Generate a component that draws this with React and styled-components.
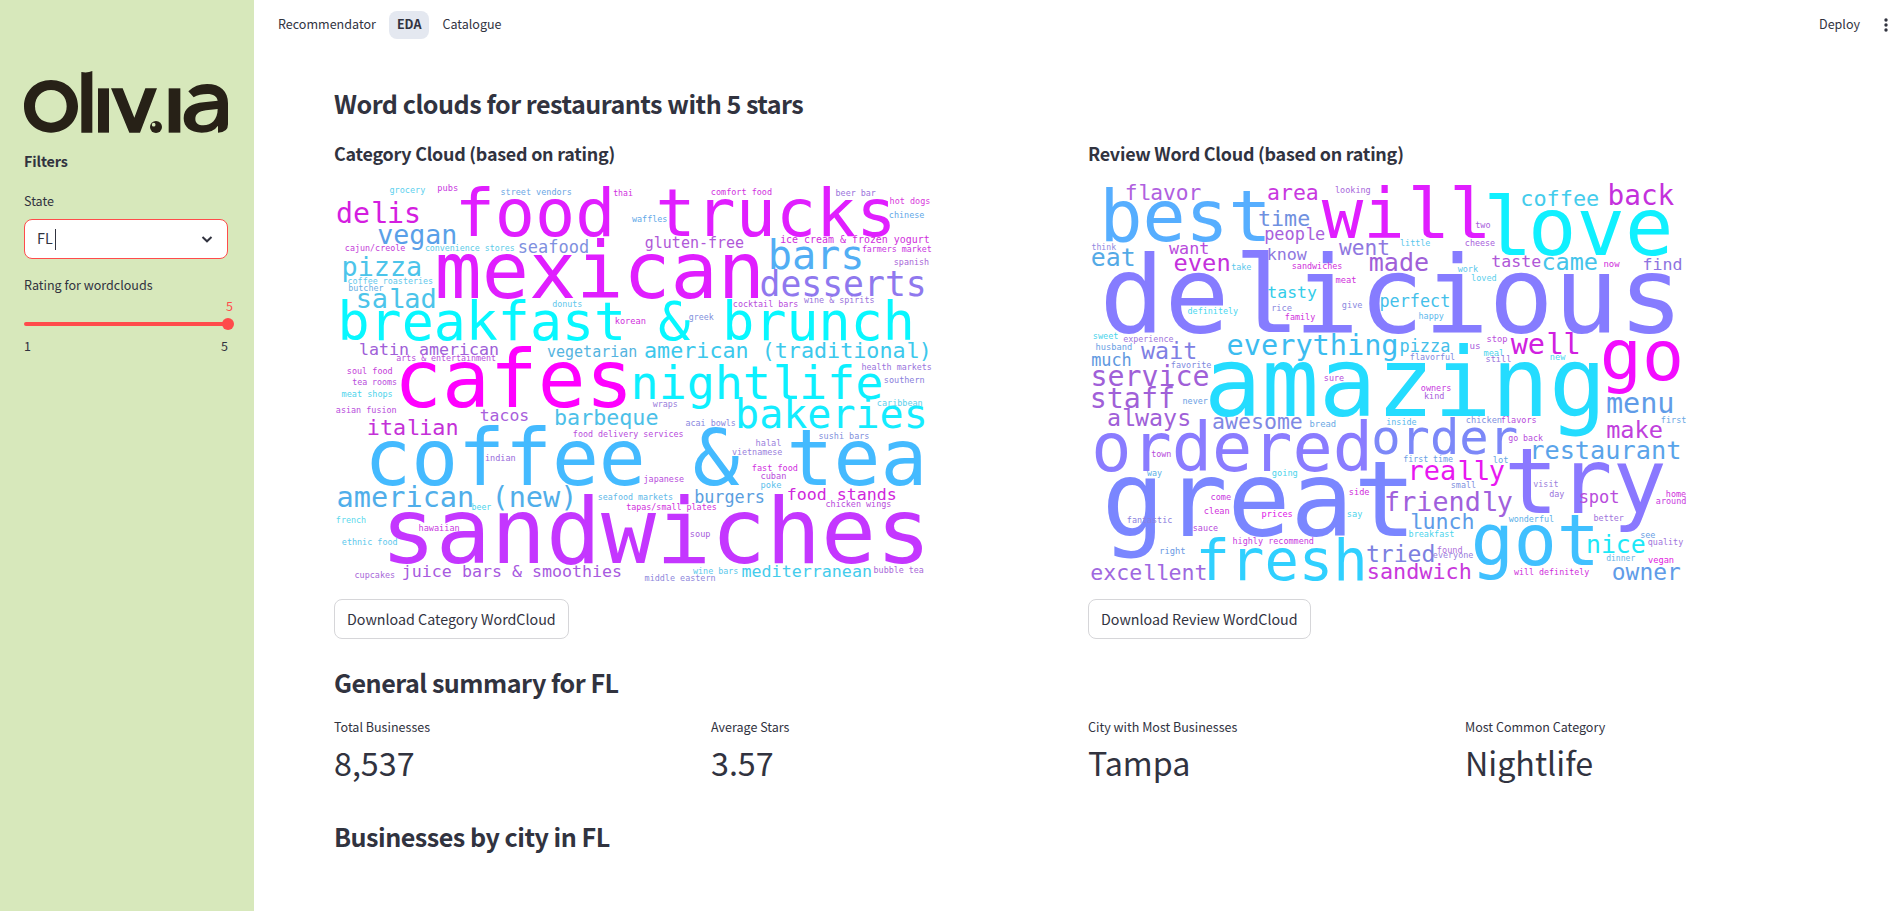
import React from "react";
import styled, { createGlobalStyle } from "styled-components";

const GlobalStyle = createGlobalStyle`
  * { box-sizing: border-box; }
  body {
    margin: 0;
    background: #ffffff;
    color: #31333f;
    font-family: "Noto Sans CJK SC", "Noto Sans", sans-serif;
    overflow: hidden;
  }
  h2, h3, p { margin: 0; }
`;

const Page = styled.div`
  display: flex;
  width: 100%;
  height: 911px;
`;

const Sidebar = styled.aside`
  width: 254px;
  flex: none;
  padding: 71px 26px 0 24px;
  background: #d7e8bb;
  display: flex;
  flex-direction: column;
`;

const Logo = styled.svg`
  display: block;
  width: 204px;
  height: 62px;
  flex: none;
`;

const SidebarTitle = styled.p`
  margin-top: 16px;
  font-size: 14.34px;
  line-height: 24px;
  font-weight: 600;
  letter-spacing: -0.1px;
`;

const FieldLabel = styled.p`
  margin-top: ${(p) => p.$gap}px;
  font-size: 12.54px;
  line-height: 20px;
`;

const SelectBox = styled.div`
  margin-top: 8px;
  height: 40px;
  border: 1px solid #ff4b4b;
  border-radius: 8px;
  background: #ffffff;
  display: flex;
  align-items: center;
  padding: 0 13px 0 12px;
`;

const SelectValue = styled.span`
  font-size: 14.34px;
  line-height: 20px;
  margin-bottom: 2px;
`;

const Caret = styled.span`
  width: 1px;
  height: 21px;
  margin-left: 2px;
  margin-right: auto;
  background: #31333f;
`;

const SliderValue = styled.div`
  width: 209px;
  margin-top: 1px;
  text-align: right;
  color: #ff4b4b;
  font-size: 12.54px;
  line-height: 20px;
`;

const SliderTrack = styled.div`
  height: 4px;
  margin-top: 6px;
  border-radius: 4px;
  background: #ff4b4b;
  display: flex;
  align-items: center;
  justify-content: flex-end;
`;

const SliderThumb = styled.span`
  width: 12px;
  height: 12px;
  flex: none;
  margin-right: -6px;
  border-radius: 50%;
  background: #ff4b4b;
`;

const SliderRange = styled.div`
  display: flex;
  justify-content: space-between;
  margin-top: 10px;
  font-size: 12.54px;
  line-height: 20px;
`;

const Main = styled.main`
  flex: 1;
  min-width: 0;
  display: flex;
  flex-direction: column;
`;

const TopBar = styled.header`
  height: 50px;
  flex: none;
  display: flex;
  align-items: center;
  padding: 0 12px 0 11px;
`;

const NavItem = styled.span`
  height: 28px;
  padding: 0 ${(p) => (p.$active ? 8 : 13)}px;
  border-radius: 8px;
  background: ${(p) => (p.$active ? "#e4e8f0" : "transparent")};
  font-size: 12.54px;
  font-weight: ${(p) => (p.$active ? 600 : 400)};
  line-height: 25px;
`;

const Deploy = styled.span`
  height: 28px;
  margin-left: auto;
  font-size: 12.54px;
  line-height: 25px;
`;

const MenuDots = styled.svg`
  width: 16px;
  height: 16px;
  margin: 0 -4px 0 18px;
`;

const Content = styled.div`
  padding: 36px 76px 0 80px;
  display: flex;
  flex-direction: column;
`;

const Heading = styled.h2`
  margin-top: ${(p) => p.$gap || 0}px;
  font-size: 25.1px;
  line-height: 34px;
  font-weight: 600;
  letter-spacing: -0.49px;
`;

const Columns = styled.div`
  display: grid;
  grid-template-columns: repeat(${(p) => p.$count}, 1fr);
  column-gap: 16px;
`;

const CloudColumn = styled.section`
  display: flex;
  flex-direction: column;
  align-items: flex-start;
  padding-top: 21px;
`;

const CloudTitle = styled.h3`
  font-size: 17.92px;
  line-height: 24px;
  font-weight: 600;
  letter-spacing: -0.24px;
`;

const CloudCanvas = styled.svg`
  display: block;
  width: 600px;
  height: 400px;
  margin-top: 17px;
  overflow: visible;
  font-family: "DejaVu Sans Mono", monospace;
`;

const SerifStem = styled.tspan`
  font-family: "Liberation Mono", monospace;
`;

const DownloadButton = styled.button`
  height: 40px;
  margin-top: 17px;
  padding: 0 12px;
  border: 1px solid #d6d6d9;
  border-radius: 8px;
  background: #ffffff;
  color: #31333f;
  font-family: inherit;
  font-size: 14.27px;
  line-height: 24px;
`;

const Metric = styled.div`
  padding-top: 18px;
`;

const MetricLabel = styled.p`
  font-size: 12.54px;
  line-height: 20px;
`;

const MetricValue = styled.p`
  margin-top: 3px;
  font-size: 32.25px;
  line-height: 44px;
`;

/* Each word: text, left and right edge of its ink, baseline, colour.
   The grid of a cloud has three units to the pixel. */
const CATEGORY_WORDS = [
  ["grocery", 195, 300, 67, "#5cd0ee"],
  ["pubs", 339, 397, 62, "#c838e0"],
  ["street vendors", 529, 738, 74, "#6aa6e4"],
  ["food trucks", 408, 1695, 195, "#e01eff"],
  ["thai", 866, 922, 76, "#d030e0"],
  ["delis", 38, 280, 157, "#d41ee0"],
  ["vegan", 160, 390, 220, "#5aa0e8"],
  ["cajun/creole", 62, 240, 242, "#c43cd8"],
  ["convenience stores", 302, 567, 242, "#5ccbe8"],
  ["seafood", 583, 788, 248, "#7f90e0"],
  ["mexican", 340, 1300, 383, "#e01eff"],
  ["pizza", 57, 285, 317, "#4cc4ea"],
  ["coffee roasteries", 70, 322, 339, "#62c8ec"],
  ["butcher", 72, 175, 362, "#6ab0e4"],
  ["salad", 100, 328, 412, "#4cc4ea"],
  ["breakfast & brunch", 52, 1756, 508, "#08f7ff"],
  ["donuts", 683, 770, 410, "#62c8ec"],
  ["korean", 872, 961, 461, "#d032dc"],
  ["latin american", 106, 518, 552, "#a060d8"],
  ["arts & entertainment", 215, 511, 572, "#b84cdc"],
  ["vegetarian", 668, 933, 558, "#55b4e0"],
  ["soul food", 68, 201, 610, "#c440d8"],
  ["cafes", 230, 902, 709, "#ff00ff"],
  ["waffles", 921, 1025, 154, "#62a8e8"],
  ["comfort food", 1160, 1339, 73, "#d030e0"],
  ["beer bar", 1534, 1652, 76, "#9a74dc"],
  ["hot dogs", 1696, 1814, 100, "#d838dc"],
  ["chinese", 1694, 1797, 143, "#62a8e8"],
  ["gluten-free", 962, 1255, 233, "#b058d8"],
  ["ice cream & frozen yogurt", 1368, 1812, 217, "#d02edc"],
  ["bars", 1339, 1607, 294, "#52aef4"],
  ["farmers market", 1613, 1818, 245, "#c838e0"],
  ["spanish", 1709, 1810, 284, "#a868d8"],
  ["desserts", 1310, 1795, 375, "#8f78ee"],
  ["wine & spirits", 1437, 1646, 397, "#9a74dc"],
  ["cocktail bars", 1226, 1418, 410, "#b84cdc"],
  ["greek", 1093, 1166, 448, "#7f90dc"],
  ["american (traditional)", 961, 1807, 561, "#3cc8ec"],
  ["health markets", 1612, 1818, 599, "#9a74dc"],
  ["nightlife", 930, 1667, 685, "#0cf0ff"],
  ["southern", 1679, 1797, 638, "#8a80dc"],
  ["tea rooms", 83, 214, 644, "#b84cdc"],
  ["meat shops", 51, 201, 680, "#4cd4ec"],
  ["asian fusion", 34, 213, 727, "#b84cdc"],
  ["italian", 131, 395, 792, "#c430d8"],
  ["tacos", 467, 608, 750, "#a860dc"],
  ["barbeque", 693, 997, 764, "#4cc0e8"],
  ["food delivery services", 746, 1073, 800, "#b84cdc"],
  ["coffee & tea", 140, 1788, 943, "#44baff"],
  ["indian", 482, 570, 872, "#9a6cdc"],
  ["american (new)", 40, 740, 1010, "#50aeea"],
  ["beer", 442, 498, 1018, "#4cd4ec"],
  ["seafood markets", 821, 1042, 989, "#62b8e8"],
  ["sandwiches", 195, 1792, 1177, "#c436ff"],
  ["french", 35, 121, 1058, "#5cd8ec"],
  ["hawaiian", 283, 402, 1082, "#c838e0"],
  ["ethnic food", 52, 216, 1123, "#5cc8ec"],
  ["juice bars & smoothies", 235, 887, 1220, "#a85ae0"],
  ["cupcakes", 91, 208, 1222, "#a868d8"],
  ["tapas/small plates", 905, 1173, 1019, "#d030dc"],
  ["wraps", 983, 1056, 708, "#9a80dc"],
  ["acai bowls", 1083, 1230, 765, "#8a88e0"],
  ["bakeries", 1241, 1797, 773, "#14ecff"],
  ["caribbean", 1658, 1791, 707, "#5cd0ec"],
  ["sushi bars", 1483, 1631, 806, "#7f90dc"],
  ["halal", 1294, 1367, 827, "#9a80dc"],
  ["vietnamese", 1222, 1371, 854, "#9a80dc"],
  ["fast food", 1283, 1417, 902, "#d030e0"],
  ["cuban", 1309, 1382, 925, "#b84cdc"],
  ["poke", 1309, 1368, 952, "#5cc0ec"],
  ["japanese", 958, 1076, 935, "#b84cdc"],
  ["burgers", 1112, 1315, 997, "#5a9ee0"],
  ["food stands", 1390, 1711, 988, "#d028dc"],
  ["chicken wings", 1504, 1697, 1009, "#b84cdc"],
  ["soup", 1097, 1155, 1100, "#a860dc"],
  ["wine bars", 1104, 1238, 1210, "#5cc8ec"],
  ["mediterranean", 1252, 1637, 1220, "#44ccec"],
  ["bubble tea", 1648, 1795, 1208, "#a868d8"],
  ["middle eastern", 960, 1170, 1231, "#8f88dc"],
];

const REVIEW_WORDS = [
  ["flavor", 140, 362, 87, "#b060e0"],
  ["best", 78, 554, 212, "#56aeff"],
  ["area", 565, 711, 87, "#c838e0"],
  ["looking", 767, 870, 68, "#a868dc"],
  ["will", 725, 1203, 203, "#e01eff"],
  ["time", 538, 687, 165, "#7090e0"],
  ["people", 557, 733, 208, "#a860dc"],
  ["think", 36, 108, 239, "#9088e0"],
  ["eat", 37, 160, 287, "#54aae6"],
  ["want", 267, 383, 251, "#b84cdc"],
  ["know", 566, 681, 268, "#8f78e0"],
  ["went", 777, 924, 253, "#8f78e0"],
  ["even", 285, 446, 302, "#c430dc"],
  ["delicious", 78, 1779, 484, "#867cff"],
  ["take", 455, 513, 299, "#5cc8ec"],
  ["sandwiches", 638, 785, 296, "#d030dc"],
  ["made", 870, 1043, 301, "#a060d8"],
  ["meat", 768, 827, 337, "#d030dc"],
  ["tasty", 565, 709, 382, "#34cdea"],
  ["definitely", 324, 474, 431, "#4cd8f0"],
  ["rice", 578, 635, 421, "#8a88e0"],
  ["family", 617, 705, 449, "#d030dc"],
  ["give", 787, 846, 413, "#8a88e0"],
  ["perfect", 903, 1106, 410, "#44c0ea"],
  ["sweet", 41, 113, 506, "#4cd4ec"],
  ["experience", 131, 279, 515, "#a074dc"],
  ["husband", 49, 154, 539, "#6aa0e4"],
  ["wait", 183, 345, 565, "#7f80e4"],
  ["much", 36, 151, 586, "#6098e0"],
  ["favorite", 275, 393, 593, "#8088e0"],
  ["everything", 445, 948, 554, "#3cbcf0"],
  ["amazing", 389, 1553, 737, "#24dcff"],
  ["service", 40, 384, 645, "#a060d8"],
  ["sure", 734, 791, 632, "#b84cdc"],
  ["coffee", 1327, 1554, 107, "#44ccec"],
  ["back", 1590, 1782, 103, "#c430dc"],
  ["love", 1217, 1767, 253, "#10f0ff"],
  ["two", 1187, 1230, 173, "#a860dc"],
  ["little", 962, 1050, 227, "#5cc8ec"],
  ["cheese", 1157, 1244, 226, "#a860dc"],
  ["taste", 1237, 1381, 290, "#b058d8"],
  ["came", 1391, 1550, 299, "#44c4ea"],
  ["now", 1573, 1619, 288, "#d030dc"],
  ["find", 1692, 1803, 299, "#8f74e0"],
  ["work", 1133, 1194, 305, "#5cc8ec"],
  ["loved", 1175, 1248, 332, "#5cd0ec"],
  ["happy", 1018, 1091, 446, "#5cb8ec"],
  ["pizza", 963, 1107, 543, "#44c0ea"],
  ["us", 1171, 1199, 536, "#a860dc"],
  ["flavorful", 992, 1123, 569, "#8088e0"],
  ["stop", 1222, 1281, 513, "#b84cdc"],
  ["meal", 1212, 1270, 555, "#4cd4ec"],
  ["still", 1219, 1292, 575, "#9a74dc"],
  ["well", 1292, 1490, 550, "#d020e0"],
  ["new", 1412, 1456, 569, "#4cd8f0"],
  ["go", 1572, 1799, 629, "#f30cff"],
  ["staff", 38, 278, 712, "#a060d8"],
  ["never", 310, 383, 700, "#6aa0e4"],
  ["always", 85, 327, 767, "#a060d8"],
  ["awesome", 400, 665, 775, "#7f88e4"],
  ["bread", 691, 766, 770, "#6aa8e4"],
  ["ordered", 47, 861, 901, "#8a7cff"],
  ["order", 883, 1309, 849, "#7c88f8"],
  ["town", 215, 272, 860, "#b84cdc"],
  ["way", 201, 245, 917, "#5cb0e8"],
  ["going", 577, 651, 917, "#4cd4ec"],
  ["great", 84, 979, 1096, "#7a86ff"],
  ["come", 394, 452, 989, "#c838e0"],
  ["side", 809, 867, 974, "#d030dc"],
  ["clean", 374, 447, 1031, "#d030dc"],
  ["prices", 547, 636, 1039, "#e020e8"],
  ["say", 803, 846, 1039, "#4cd4ec"],
  ["fantastic", 143, 275, 1058, "#8a80e0"],
  ["sauce", 341, 413, 1082, "#b84cdc"],
  ["highly recommend", 460, 700, 1120, "#c838e0"],
  ["fresh", 363, 848, 1228, "#30d0ff"],
  ["right", 242, 314, 1150, "#6a98e4"],
  ["excellent", 35, 376, 1227, "#a068e0"],
  ["tried", 862, 1060, 1173, "#7c80e0"],
  ["sandwich", 867, 1170, 1226, "#c838dc"],
  ["owners", 1024, 1112, 662, "#c838e0"],
  ["kind", 1035, 1091, 686, "#a860dc"],
  ["inside", 921, 1008, 764, "#5cb8ec"],
  ["chicken", 1160, 1264, 758, "#7f90e0"],
  ["flavors", 1265, 1368, 758, "#b84cdc"],
  ["go back", 1286, 1389, 812, "#b84cdc"],
  ["menu", 1582, 1776, 727, "#609ce8"],
  ["first", 1745, 1817, 758, "#6aa8e4"],
  ["make", 1582, 1745, 802, "#c040dc"],
  ["restaurant", 1361, 1797, 864, "#5aa4ea"],
  ["first time", 972, 1118, 875, "#6aa0e4"],
  ["lot", 1240, 1283, 877, "#6aa8e4"],
  ["really", 997, 1272, 929, "#e818f0"],
  ["small", 1115, 1186, 953, "#7f90e0"],
  ["try", 1288, 1750, 1027, "#8a78ff"],
  ["visit", 1361, 1433, 950, "#9a80dc"],
  ["day", 1409, 1452, 979, "#9a74dc"],
  ["spot", 1501, 1614, 997, "#b84cdc"],
  ["home", 1760, 1817, 979, "#d030dc"],
  ["around", 1729, 1817, 1001, "#c838e0"],
  ["friendly", 920, 1296, 1021, "#a060dc"],
  ["lunch", 993, 1178, 1074, "#609ce8"],
  ["breakfast", 988, 1121, 1100, "#4cd4ec"],
  ["wonderful", 1286, 1420, 1055, "#5cb0e8"],
  ["better", 1543, 1631, 1052, "#a074dc"],
  ["got", 1185, 1539, 1182, "#40c0ff"],
  ["nice", 1525, 1693, 1148, "#1ce8f8"],
  ["see", 1683, 1725, 1103, "#6aa0e4"],
  ["quality", 1705, 1809, 1124, "#a074dc"],
  ["found", 1073, 1146, 1146, "#b070dc"],
  ["everyone", 1060, 1179, 1163, "#9a80dc"],
  ["dinner", 1580, 1665, 1171, "#6ab4e8"],
  ["vegan", 1705, 1780, 1178, "#e020e0"],
  ["will definitely", 1302, 1527, 1212, "#d030dc"],
  ["owner", 1600, 1800, 1227, "#609ce8"],
];

const METRICS = [
  ["Total Businesses", "8,537"],
  ["Average Stars", "3.57"],
  ["City with Most Businesses", "Tampa"],
  ["Most Common Category", "Nightlife"],
];

const measure = document.createElement("canvas").getContext("2d");

/* Font size and origin at which a word's ink spans left..right. */
function fitWord(text, left, right) {
  measure.font = '200px "DejaVu Sans Mono", monospace';
  const m = measure.measureText(text);
  const scale = (right - left) / (m.actualBoundingBoxLeft + m.actualBoundingBoxRight);
  return { x: left + m.actualBoundingBoxLeft * scale, size: 200 * scale };
}

const ADVANCE = 0.602;
const STEM_SCALE = 1.05;

/* A flat-footed "l" replaces the curled one in the larger words. */
function Word({ text, left, right, baseline, color }) {
  const { x, size } = fitWord(text, left, right);
  if (size < 50 || !text.includes("l")) {
    return (
      <text x={x} y={baseline} fontSize={size} fill={color}>
        {text}
      </text>
    );
  }
  const runs = [];
  let start = 0;
  for (const part of text.split(/(l)/)) {
    if (part) runs.push({ part, start });
    start += part.length;
  }
  return (
    <text y={baseline} fontSize={size} fill={color}>
      {runs.map(({ part, start: index }) => {
        const cell = x + index * ADVANCE * size;
        return part === "l" ? (
          <SerifStem key={index} x={cell - 0.014 * size} fontSize={size * STEM_SCALE}>
            l
          </SerifStem>
        ) : (
          <tspan key={index} x={cell}>
            {part}
          </tspan>
        );
      })}
    </text>
  );
}

function WordCloud({ words, originX }) {
  return (
    <CloudCanvas viewBox={`${originX} 34.5 1800 1200`}>
      {words.map(([text, left, right, baseline, color]) => (
        <Word key={text} text={text} left={left} right={right} baseline={baseline} color={color} />
      ))}
    </CloudCanvas>
  );
}

function OliviaLogo() {
  return (
    <Logo viewBox="0 0 612 186" role="img" aria-label="oliv.ia">
      <g fill="#272117">
        <path
          fillRule="evenodd"
          d="M81 27C127 27 162 61 162 106S127 185 81 185 0 151 0 106 35 27 81 27ZM81 57C53 57 33 78 33 106S53 155 81 155 128 134 128 106 109 57 81 57Z"
        />
        <path d="M172 3Q190 7 205 0V185H172Z" />
        <path d="M222 52H255V185H222Z" />
        <path d="M261 52H296L331 140 364 52H399L348 185H316Z" />
        <circle cx="396" cy="168" r="18" />
        <path d="M434 52H469V185H434Z" />
        <path
          fillRule="evenodd"
          d="M493 61Q515 39 549 39C590 39 612 61 612 97V160Q612 185 582 185V164Q568 185 533 185C499 185 479 168 479 142C479 111 503 97 539 94L581 89C579 76 568 69 550 69Q526 69 509 79ZM581 114L546 118C525 121 514 129 514 144C514 156 523 163 538 163C562 163 581 146 581 114Z"
        />
      </g>
      <circle cx="389" cy="161" r="5.5" fill="#d7e8bb" />
    </Logo>
  );
}

export default function App() {
  return (
    <>
      <GlobalStyle />
      <Page>
        <Sidebar>
          <OliviaLogo />
          <SidebarTitle>Filters</SidebarTitle>
          <FieldLabel $gap={18}>State</FieldLabel>
          <SelectBox>
            <SelectValue>FL</SelectValue>
            <Caret />
            <svg width="14" height="14" viewBox="0 0 14 14" fill="none" stroke="#31333f" strokeWidth="2">
              <path d="M2.5 5L7 9.3 11.5 5" />
            </svg>
          </SelectBox>
          <FieldLabel $gap={16}>Rating for wordclouds</FieldLabel>
          <SliderValue>5</SliderValue>
          <SliderTrack>
            <SliderThumb />
          </SliderTrack>
          <SliderRange>
            <span>1</span>
            <span>5</span>
          </SliderRange>
        </Sidebar>
        <Main>
          <TopBar>
            <NavItem>Recommendator</NavItem>
            <NavItem $active>EDA</NavItem>
            <NavItem>Catalogue</NavItem>
            <Deploy>Deploy</Deploy>
            <MenuDots viewBox="0 0 16 16" fill="#31333f">
              <circle cx="8" cy="3" r="1.7" />
              <circle cx="8" cy="8" r="1.7" />
              <circle cx="8" cy="13" r="1.7" />
            </MenuDots>
          </TopBar>
          <Content>
            <Heading>Word clouds for restaurants with 5 stars</Heading>
            <Columns $count={2}>
              <CloudColumn>
                <CloudTitle>Category Cloud (based on rating)</CloudTitle>
                <WordCloud words={CATEGORY_WORDS} originX={27} />
                <DownloadButton>Download Category WordCloud</DownloadButton>
              </CloudColumn>
              <CloudColumn>
                <CloudTitle>Review Word Cloud (based on rating)</CloudTitle>
                <WordCloud words={REVIEW_WORDS} originX={24} />
                <DownloadButton>Download Review WordCloud</DownloadButton>
              </CloudColumn>
            </Columns>
            <Heading $gap={26}>General summary for FL</Heading>
            <Columns $count={4}>
              {METRICS.map(([label, value]) => (
                <Metric key={label}>
                  <MetricLabel>{label}</MetricLabel>
                  <MetricValue>{value}</MetricValue>
                </Metric>
              ))}
            </Columns>
            <Heading $gap={35}>Businesses by city in FL</Heading>
          </Content>
        </Main>
      </Page>
    </>
  );
}
